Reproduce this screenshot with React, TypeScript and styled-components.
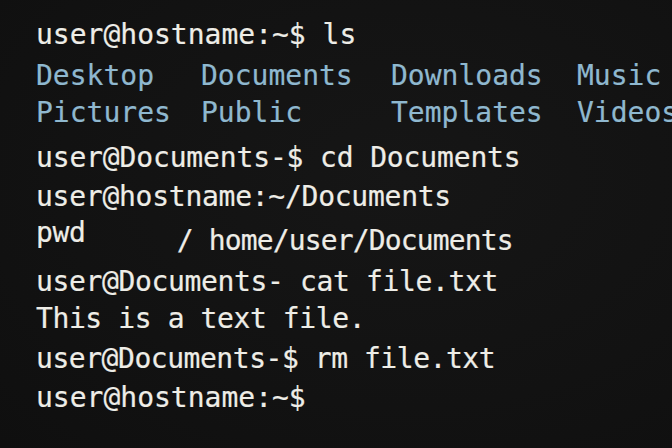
import React from "react";
import styled, { createGlobalStyle } from "styled-components";

const Global = createGlobalStyle`
  html, body { margin: 0; padding: 0; background: #121212; }
  #root { width: 672px; height: 448px; }
`;

const Terminal = styled.div`
  box-sizing: border-box;
  width: 672px;
  height: 448px;
  overflow: hidden;
  padding: 21px 0 0 36px;
  background: radial-gradient(ellipse at 60% 40%, #161616 0%, #121212 60%, #0f0f0f 100%);
  font-family: "DejaVu Sans Mono", "Liberation Mono", monospace;
  font-size: 28px;
  line-height: 28px;
  color: #eeede7;
  white-space: pre;
  -webkit-text-stroke: 0.2px currentColor;
`;

const Line = styled.div<{ $mt?: number; $ls?: number }>`
  margin-top: ${(p) => p.$mt ?? 0}px;
  letter-spacing: ${(p) => p.$ls ?? 0}px;
  height: 28px;
`;

const Listing = styled.div<{ $mt?: number }>`
  display: grid;
  grid-template-columns: 165px 190px 186px auto;
  margin-top: ${(p) => p.$mt ?? 0}px;
  color: #8fb8cf;
  row-gap: 9px;
  line-height: 28px;
`;

const PwdRow = styled.div<{ $mt?: number }>`
  display: flex;
  align-items: flex-start;
  margin-top: ${(p) => p.$mt ?? 0}px;
`;

const Cmd = styled.span`
  letter-spacing: -0.3px;
`;

const Output = styled.span`
  padding-top: 8px;
  margin-left: 91px;
  letter-spacing: -0.86px;
`;

const entries = [
  "Desktop",
  "Documents",
  "Downloads",
  "Music",
  "Pictures",
  "Public",
  "Templates",
  "Videos",
];

export default function App() {
  return (
    <>
      <Global />
      <Terminal>
        <Line>user@hostname:~$ ls</Line>
        <Listing $mt={13}>
          {entries.map((e) => (
            <span key={e}>{e}</span>
          ))}
        </Listing>
        <Line $mt={17} $ls={-0.15}>user@Documents-$ cd Documents</Line>
        <Line $mt={11} $ls={-0.26}>user@hostname:~/Documents</Line>
        <PwdRow $mt={8}>
          <Cmd>pwd</Cmd>
          <Output>/ home/user/Documents</Output>
        </PwdRow>
        <Line $mt={13} $ls={-0.36}>user@Documents- cat file.txt</Line>
        <Line $mt={9} $ls={-0.4}>This is a text file.</Line>
        <Line $mt={12} $ls={-0.46}>user@Documents-$ rm file.txt</Line>
        <Line $mt={11}>user@hostname:~$</Line>
      </Terminal>
    </>
  );
}
